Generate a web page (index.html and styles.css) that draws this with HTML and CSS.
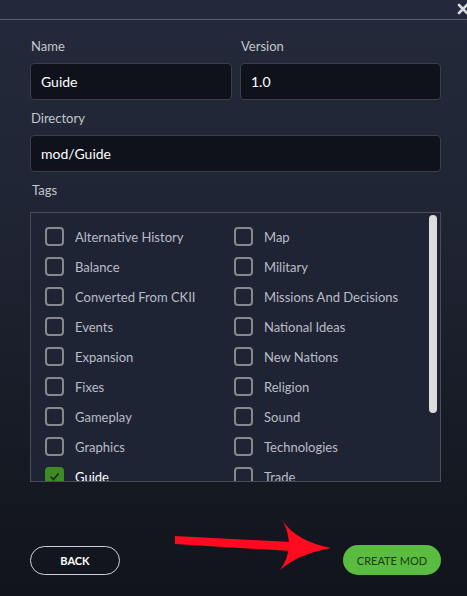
FILE: index.html
```html
<!DOCTYPE html>
<html>
<head>
<meta charset="utf-8">
<link rel="stylesheet" href="styles.css">
</head>
<body>
<div class="dialog">
  <div class="topbar">
    <svg class="close" width="12" height="12" viewBox="0 0 12 12"><path d="M2 2 L10 10 M10 2 L2 10" stroke="#d6d8dc" stroke-width="2.6" stroke-linecap="round"/></svg>
  </div>
  <div class="form">
    <div class="row2">
      <div class="field">
        <div class="label">Name</div>
        <div class="input">Guide</div>
      </div>
      <div class="field">
        <div class="label">Version</div>
        <div class="input">1.0</div>
      </div>
    </div>
    <div class="field">
      <div class="label">Directory</div>
      <div class="input">mod/Guide</div>
    </div>
    <div class="field tags-field">
      <div class="label tags-label">Tags</div>
      <div class="tagbox">
        <div class="taglist">
          <div class="tag"><span class="cb"></span><span class="tx">Alternative History</span></div>
          <div class="tag"><span class="cb"></span><span class="tx">Map</span></div>
          <div class="tag"><span class="cb"></span><span class="tx">Balance</span></div>
          <div class="tag"><span class="cb"></span><span class="tx">Military</span></div>
          <div class="tag"><span class="cb"></span><span class="tx">Converted From CKII</span></div>
          <div class="tag"><span class="cb"></span><span class="tx">Missions And Decisions</span></div>
          <div class="tag"><span class="cb"></span><span class="tx">Events</span></div>
          <div class="tag"><span class="cb"></span><span class="tx">National Ideas</span></div>
          <div class="tag"><span class="cb"></span><span class="tx">Expansion</span></div>
          <div class="tag"><span class="cb"></span><span class="tx">New Nations</span></div>
          <div class="tag"><span class="cb"></span><span class="tx">Fixes</span></div>
          <div class="tag"><span class="cb"></span><span class="tx">Religion</span></div>
          <div class="tag"><span class="cb"></span><span class="tx">Gameplay</span></div>
          <div class="tag"><span class="cb"></span><span class="tx">Sound</span></div>
          <div class="tag"><span class="cb"></span><span class="tx">Graphics</span></div>
          <div class="tag"><span class="cb"></span><span class="tx">Technologies</span></div>
          <div class="tag checked"><span class="cb"><svg width="13" height="13" viewBox="0 0 13 13"><path d="M2.5 6.5 L5.5 9.5 L10.5 3.5" fill="none" stroke="#1c2a14" stroke-width="1.6"/></svg></span><span class="tx">Guide</span></div>
          <div class="tag"><span class="cb"></span><span class="tx">Trade</span></div>
        </div>
        <div class="scrollbar"></div>
      </div>
    </div>
  </div>
  <div class="footer">
    <button class="btn back">BACK</button>
    <button class="btn create">CREATE MOD</button>
  </div>
  <svg class="arrow" width="467" height="596" viewBox="0 0 467 596">
    <path d="M175 536 L291 542 L291 551 L175 544 Z" fill="#ff0a1e"/>
    <path d="M283 521 Q296 541 331 548 Q298 554 280 570 Q296 548 283 521 Z" fill="#ff0a1e"/>
  </svg>
</div>
</body>
</html>
```

FILE: styles.css
```css
* { box-sizing: border-box; }
html, body {
  margin: 0;
  padding: 0;
  width: 467px;
  height: 596px;
  overflow: hidden;
}
body {
  font-family: Lato, "Noto Sans", sans-serif;
  background: linear-gradient(180deg, #242a3b 0%, #1f2433 40%, #151922 80%, #11141b 100%);
  color: #ffffff;
}
.dialog {
  position: relative;
  width: 467px;
  height: 596px;
}
.topbar {
  height: 20px;
  border-bottom: 1px solid #5a5f6d;
  display: flex;
  justify-content: flex-end;
  align-items: flex-start;
}
.close {
  margin-top: 3px;
  margin-right: -2px;
}
.form {
  padding: 17px 26px 0 30px;
  display: flex;
  flex-direction: column;
  gap: 9px;
}
.row2 {
  display: grid;
  grid-template-columns: 202px 201px;
  gap: 8px;
}
.field {
  display: flex;
  flex-direction: column;
  gap: 8px;
}
.label {
  font-size: 13px;
  line-height: 18px;
  color: #c4c6cb;
  padding-left: 1px;
}
.tags-label { padding-left: 2px; }
.tags-field { gap: 13px; }
.input {
  height: 37px;
  background: #0f121a;
  border: 1px solid #3a3f4b;
  border-radius: 4px;
  font-size: 14px;
  line-height: 35px;
  padding-left: 10px;
  color: #ffffff;
}
.tagbox {
  position: relative;
  height: 270px;
  background: #1f2435;
  border: 1px solid #4b4e57;
  overflow: hidden;
}
.taglist {
  display: grid;
  grid-template-columns: 189px 200px;
  grid-auto-rows: 30px;
  padding: 14px 0 0 14px;
}
.tag {
  display: flex;
  align-items: flex-start;
  gap: 11px;
  font-size: 13px;
  line-height: 19px;
  color: #b9bdc6;
}
.tx { padding-top: 1px; }
.cb {
  width: 19px;
  height: 19px;
  flex: none;
  border: 2px solid #86888d;
  border-radius: 4px;
  display: flex;
  align-items: center;
  justify-content: center;
}
.checked .cb {
  background: #3e8a24;
  border-color: #3e8a24;
}
.checked .tx { color: #ffffff; }
.scrollbar {
  position: absolute;
  top: 2px;
  right: 3px;
  width: 8px;
  height: 198px;
  background: #dcdcde;
  border-radius: 4px;
}
.footer {
  display: flex;
  justify-content: space-between;
  align-items: center;
  padding: 63px 26px 0 30px;
}
.btn {
  font-family: Lato, "Noto Sans", sans-serif;
  font-size: 11px;
  font-weight: 600;
  border-radius: 15px;
  padding: 0;
  cursor: pointer;
}
.back {
  width: 90px;
  height: 29px;
  background: transparent;
  border: 1px solid #cfd0d3;
  color: #ffffff;
  font-weight: 700;
}
.create {
  width: 98px;
  height: 30px;
  background: #5abd3f;
  border: none;
  color: #1e3a18;
  font-weight: 400;
}
.arrow {
  position: absolute;
  left: 0;
  top: 0;
  pointer-events: none;
}
```
